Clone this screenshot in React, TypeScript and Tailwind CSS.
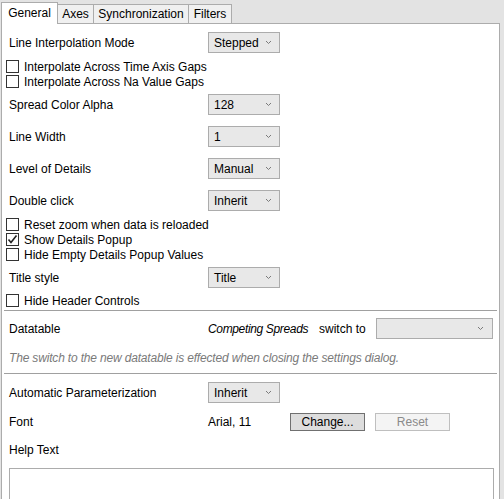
import React from "react";

function Chevron() {
  return (
    <svg width="7" height="5" viewBox="0 0 7 5" className="shrink-0">
      <polyline points="1,1 3.5,3.5 6,1" fill="none" stroke="#7a7a7a" strokeWidth="1" />
    </svg>
  );
}

function Dropdown({ value, width = "w-[72px]" }: { value: string; width?: string }) {
  return (
    <div className={`${width} h-[21px] border border-[#acacac] bg-[#e8e8e8] flex items-center justify-between pl-[5px] pr-[7px]`}>
      <span className="leading-none">{value}</span>
      <Chevron />
    </div>
  );
}

function Check({ label, checked = false }: { label: string; checked?: boolean }) {
  return (
    <div className="h-[15px] flex items-center pl-[4px]">
      <div className="w-[13px] h-[13px] border border-[#333333] bg-white flex items-center justify-center">
        {checked && (
          <svg width="11" height="11" viewBox="0 0 11 11">
            <polyline points="1.5,5.5 4,8.5 9.5,1.5" fill="none" stroke="#222" strokeWidth="1.6" />
          </svg>
        )}
      </div>
      <span className="ml-[5px] leading-none">{label}</span>
    </div>
  );
}

function Row({ label, value, mt }: { label: string; value: string; mt: string }) {
  return (
    <div className={`${mt} h-[21px] flex items-center`}>
      <div className="w-[206px] pl-[7px]">{label}</div>
      <Dropdown value={value} />
    </div>
  );
}

export default function App() {
  const tabBase = "h-[19px] border-t border-l border-r border-[#acacac] bg-[#f0f0f0] -ml-px flex items-center justify-center";
  return (
    <div
      className="w-[504px] h-[499px] bg-[#e3e3e3] overflow-hidden text-[12px] text-black"
      style={{ fontFamily: '"Liberation Sans", Arial, sans-serif' }}
    >
      <div className="flex items-end h-[21px] mt-[2px] ml-[1px]">
        <div className="relative z-10 w-[57px] h-[22px] -mb-px border-t border-l border-r border-[#acacac] bg-white flex items-center justify-center pb-[2px]">
          General
        </div>
        <div className={`${tabBase} w-[37px]`}>Axes</div>
        <div className={`${tabBase} w-[96px]`}>Synchronization</div>
        <div className={`${tabBase} w-[44px]`}>Filters</div>
      </div>
      <div className="ml-[1px] w-[499px] h-[490px] border border-[#acacac] bg-white flex flex-col">
        <Row mt="mt-[8px]" label="Line Interpolation Mode" value="Stepped" />
        <div className="mt-[6px]">
          <Check label="Interpolate Across Time Axis Gaps" />
          <Check label="Interpolate Across Na Value Gaps" />
        </div>
        <Row mt="mt-[5px]" label="Spread Color Alpha" value="128" />
        <Row mt="mt-[11px]" label="Line Width" value="1" />
        <Row mt="mt-[11px]" label="Level of Details" value="Manual" />
        <Row mt="mt-[11px]" label="Double click" value="Inherit" />
        <div className="mt-[6px]">
          <Check label="Reset zoom when data is reloaded" />
          <Check label="Show Details Popup" checked />
          <Check label="Hide Empty Details Popup Values" />
        </div>
        <Row mt="mt-[5px]" label="Title style" value="Title" />
        <div className="mt-[5px]">
          <Check label="Hide Header Controls" />
        </div>
        <div className="mt-[2px] mx-[2px] h-px bg-[#a0a0a0]" />
        <div className="mt-[7px] h-[21px] flex items-center whitespace-nowrap">
          <div className="w-[206px] pl-[7px]">Datatable</div>
          <div className="w-[111px] italic tracking-[-0.35px]">Competing Spreads</div>
          <div className="w-[57px]">switch to</div>
          <div className="w-[117px] h-[21px] border border-[#acacac] bg-[#e8e8e8] flex items-center justify-end pr-[8px]">
            <Chevron />
          </div>
        </div>
        <div className="mt-[11px] h-[16px] flex items-center pl-[7px] italic text-[#7a7a7a] tracking-[-0.17px] whitespace-nowrap">
          The switch to the new datatable is effected when closing the settings dialog.
        </div>
        <div className="mt-[7px] mx-[2px] h-px bg-[#a0a0a0]" />
        <Row mt="mt-[8px]" label="Automatic Parameterization" value="Inherit" />
        <div className="mt-[10px] h-[18px] flex items-center">
          <div className="w-[206px] pl-[7px]">Font</div>
          <div className="w-[82px]">Arial, 11</div>
          <div className="w-[75px] h-[18px] border border-[#707070] bg-[#dddddd] flex items-center justify-center">
            Change...
          </div>
          <div className="ml-[10px] w-[75px] h-[18px] border border-[#bfbfbf] bg-[#f4f4f4] text-[#8a8a8a] flex items-center justify-center">
            Reset
          </div>
        </div>
        <div className="mt-[11px] h-[16px] flex items-center pl-[7px]">Help Text</div>
        <div className="mt-[10px] ml-[7px] w-[485px] h-[40px] border border-[#acacac] bg-white" />
      </div>
    </div>
  );
}
